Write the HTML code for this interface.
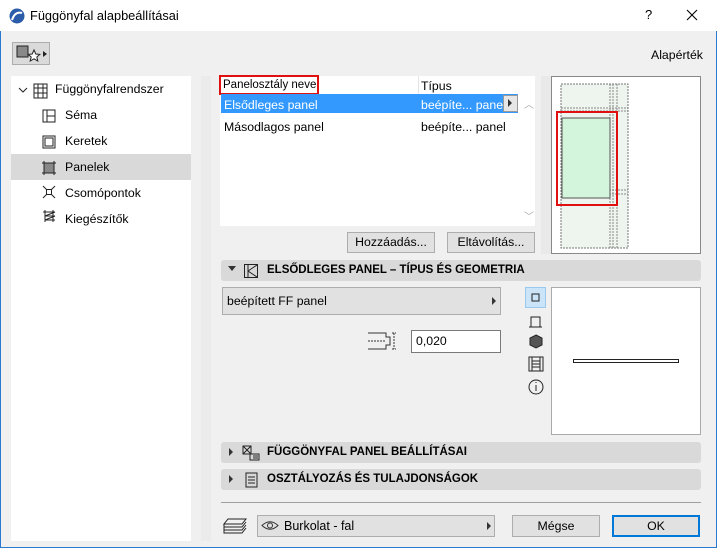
<!DOCTYPE html>
<html><head><meta charset="utf-8"><style>
*{margin:0;padding:0;box-sizing:border-box}
body{width:717px;height:548px;overflow:hidden;background:#f0f0f0;font-family:"Liberation Sans",sans-serif;font-size:12.3px;color:#000;position:relative}
.a{position:absolute}
.win{left:0;top:0;width:717px;height:548px;border:1px solid #2b79d0;border-top:none}
.btn{position:absolute;background:#e1e1e1;border:1px solid #adadad;text-align:center;line-height:18px}
.sec{position:absolute;left:221px;width:480px;height:21px;background:#d9d9d9;border-radius:3px;font-weight:bold;font-size:11.5px;line-height:21px}
.tri{position:absolute;width:0;height:0;border-top:4px solid transparent;border-bottom:4px solid transparent;border-left:4px solid #333}
</style></head><body>
<div class="a win"></div>
<div class="a" style="left:0;top:0;width:717px;height:31px;background:#fff"></div>
<svg class="a" style="left:9px;top:8px" width="17" height="17"><circle cx="8" cy="8" r="7.5" fill="#2a5caa"/><path d="M3 12 Q6 3 13 5" stroke="#fff" stroke-width="2" fill="none"/></svg>
<div class="a" style="left:30px;top:8px;font-size:12.8px">Függönyfal alapbeállításai</div>
<div class="a" style="left:645px;top:7px;font-size:13px">?</div>
<svg class="a" style="left:686px;top:9px" width="12" height="12"><path d="M1 1L11 11M11 1L1 11" stroke="#000" stroke-width="1.1"/></svg>
<div class="a" style="left:12px;top:42px;width:38px;height:23px;background:#dadada;border:1px solid #adadad"></div>
<svg class="a" style="left:14px;top:44px" width="34" height="20"><rect x="3" y="2" width="11" height="11" fill="#888" stroke="#222"/><path d="M20 6l1.8 4 4 .4-3 2.6 1 4-3.8-2.2-3.8 2.2 1-4-3-2.6 4-.4z" fill="#fff" stroke="#222"/><path d="M29 7l4 3-4 3z" fill="#222"/></svg>
<div class="a" style="left:651px;top:48px">Alapérték</div>
<!-- tree -->
<div class="a" style="left:11px;top:76px;width:180px;height:465px;background:#fff"></div>
<div class="a" style="left:11px;top:154px;width:180px;height:26px;background:#d9d9d9"></div>
<svg class="a" style="left:17px;top:82px" width="170" height="150" fill="none" stroke="#222">
<path d="M2 6l4 4 4-4"/>
<path d="M17 2h13v14h-13zM17 6h13M17 11h13M21 2v14M26 2v14"/>
<path d="M26 28h12v12h-12zM30 28v12M30 34h8"/>
<path d="M26 54h12v12h-12zM28 56h8v8h-8z"/>
<rect x="27" y="81" width="10" height="10" fill="#888"/><path d="M25 81h14M25 91h14M27 79v14M37 79v14"/>
<path d="M26 104l12 12M38 104l-12 12"/><rect x="29.5" y="107.5" width="5" height="5" fill="#fff"/>
<path d="M26 130h12l-10 4h10l-10 4h10M28 128v12M36 128v12"/>
</svg>
<div class="a" style="left:55px;top:82px">Függönyfalrendszer</div>
<div class="a" style="left:65px;top:108px">Séma</div>
<div class="a" style="left:65px;top:134px">Keretek</div>
<div class="a" style="left:65px;top:160px">Panelek</div>
<div class="a" style="left:65px;top:186px">Csomópontok</div>
<div class="a" style="left:65px;top:212px">Kiegészítők</div>
<!-- list -->
<div class="a" style="left:201px;top:76px;width:10px;height:465px;background:#ebebeb"></div>
<div class="a" style="left:220px;top:76px;width:315px;height:150px;background:#fff"></div>
<div class="a" style="left:418px;top:76px;width:1px;height:18px;background:#e5e5e5"></div>
<div class="a" style="left:219px;top:75px;width:100px;height:20px;border:2px solid #e01010"></div>
<div class="a" style="left:223px;top:79px;font-size:11.5px">Panelosztály neve</div>
<div class="a" style="left:421px;top:79px">Típus</div>
<div class="a" style="left:221px;top:94px;width:297px;height:19px;background:#3399ff"></div>
<div class="a" style="left:224px;top:98px;color:#fff">Elsődleges panel</div>
<div class="a" style="left:421px;top:98px;color:#fff">beépíte... panel</div>
<div class="a" style="left:503px;top:95px;width:15px;height:17px;background:#e6e6e6;border:1px solid #999"></div>
<div class="tri" style="left:508px;top:99px"></div>
<div class="a" style="left:224px;top:120px">Másodlagos panel</div>
<div class="a" style="left:421px;top:120px">beépíte... panel</div>
<div class="a" style="left:524px;top:96px;color:#aaa;font-size:10px">︿</div>
<div class="a" style="left:524px;top:208px;color:#aaa;font-size:10px">﹀</div>
<div class="btn" style="left:347px;top:232px;width:88px;height:21px">Hozzáadás...</div>
<div class="btn" style="left:447px;top:232px;width:88px;height:21px">Eltávolítás...</div>
<div class="a" style="left:541px;top:76px;width:10px;height:178px;background:#e9e9e9"></div>
<div class="a" style="left:551px;top:76px;width:150px;height:178px;background:#fff;border:1px solid #888"></div>
<svg class="a" style="left:551px;top:76px" width="150" height="178">
<rect x="10" y="8" width="67" height="164" fill="#eef5ee" stroke="#777" stroke-dasharray="2,1"/>
<path d="M59 8v164M62 8v164M66 8v164M10 32h67M10 35h67M10 114h67M10 118h67" stroke="#888" stroke-dasharray="2,1"/>
<rect x="11" y="42" width="48" height="80" fill="#d3f5dc" stroke="#555"/>
<rect x="6" y="36" width="60" height="93" fill="none" stroke="#e01010" stroke-width="2"/>
</svg>
<!-- section 1 -->
<div class="sec" style="top:260px"><div class="tri" style="left:7px;top:6px;border:4px solid transparent;border-top:5px solid #333;border-bottom:none"></div><svg class="a" style="left:22px;top:3px" width="16" height="16" fill="none" stroke="#222"><rect x="1.5" y="1.5" width="13" height="13"/><path d="M5 1.5v13M5 8l9-6M5 8l9 6"/></svg><span style="position:absolute;left:46px">ELSŐDLEGES PANEL – TÍPUS ÉS GEOMETRIA</span></div>
<div class="btn" style="left:222px;top:287px;width:279px;height:28px;text-align:left;padding-left:4px;line-height:26px">beépített FF panel</div>
<div class="tri" style="left:492px;top:297px"></div>
<svg class="a" style="left:368px;top:329px" width="40" height="24" fill="none" stroke="#333"><path d="M0 4h18v4h4v8h-4v4H0" /><path d="M0 12h18" stroke-dasharray="2,1"/><path d="M26 4v16M24 4h4M24 20h4" stroke-dasharray="2,1"/></svg>
<div class="a" style="left:411px;top:330px;width:90px;height:23px;background:#fff;border:1px solid #7a7a7a;padding-left:4px;line-height:21px">0,020</div>
<div class="a" style="left:525px;top:287px;width:21px;height:21px;background:#cce4f7;border:1px solid #99c9ef"></div>
<svg class="a" style="left:525px;top:287px" width="22" height="110" fill="none" stroke="#222">
<rect x="7" y="7" width="7" height="7"/>
<path d="M6 40v-10h9v10M4 40h13"/>
<path d="M11 48l6 3v7l-6 3-6-3v-7z" fill="#555"/>
<path d="M4 70h14v14H4zM7 70v14M15 70v14M7 74h8M7 77h8M7 80h8"/>
<circle cx="11" cy="100" r="7"/><path d="M11 98v6M11 95v1"/>
</svg>
<div class="a" style="left:551px;top:287px;width:150px;height:148px;background:#fff;border:1px solid #aaa"></div>
<div class="a" style="left:573px;top:359px;width:106px;height:4px;border:1px solid #222"></div>
<!-- sections -->
<div class="sec" style="top:442px"><div class="tri" style="left:8px;top:6px"></div><svg class="a" style="left:21px;top:3px" width="18" height="16" fill="none" stroke="#222"><rect x="1" y="1" width="8" height="8"/><path d="M1 1l8 8M9 1l-8 8M8 9h9v6H8zM11 11h5M11 13h5"/></svg><span style="position:absolute;left:46px">FÜGGÖNYFAL PANEL BEÁLLÍTÁSAI</span></div>
<div class="sec" style="top:469px"><div class="tri" style="left:8px;top:6px"></div><svg class="a" style="left:24px;top:3px" width="14" height="16" fill="none" stroke="#222"><rect x="1" y="1" width="11" height="14"/><path d="M3 5h7M3 8h7M3 11h7"/></svg><span style="position:absolute;left:46px">OSZTÁLYOZÁS ÉS TULAJDONSÁGOK</span></div>
<div class="a" style="left:221px;top:502px;width:480px;height:1px;background:#a0a0a0"></div>
<svg class="a" style="left:222px;top:517px" width="26" height="18" fill="none" stroke="#222"><path d="M6 2h18l-4 5H2zM2 7v3h18l4-5M2 10v3h18l4-5M2 13v3h18l4-5"/></svg>
<div class="btn" style="left:257px;top:515px;width:238px;height:22px;text-align:left;padding-left:26px;line-height:20px;font-size:12.5px">Burkolat - fal</div>
<svg class="a" style="left:261px;top:520px" width="18" height="11" fill="none" stroke="#333"><path d="M1 5.5Q9 -2 17 5.5Q9 13 1 5.5z"/><circle cx="9" cy="5.5" r="2.5"/></svg>
<div class="tri" style="left:487px;top:522px"></div>
<div class="btn" style="left:512px;top:515px;width:88px;height:22px;line-height:20px">Mégse</div>
<div class="btn" style="left:612px;top:515px;width:88px;height:22px;line-height:18px;border:2px solid #0078d7">OK</div>
</body></html>
